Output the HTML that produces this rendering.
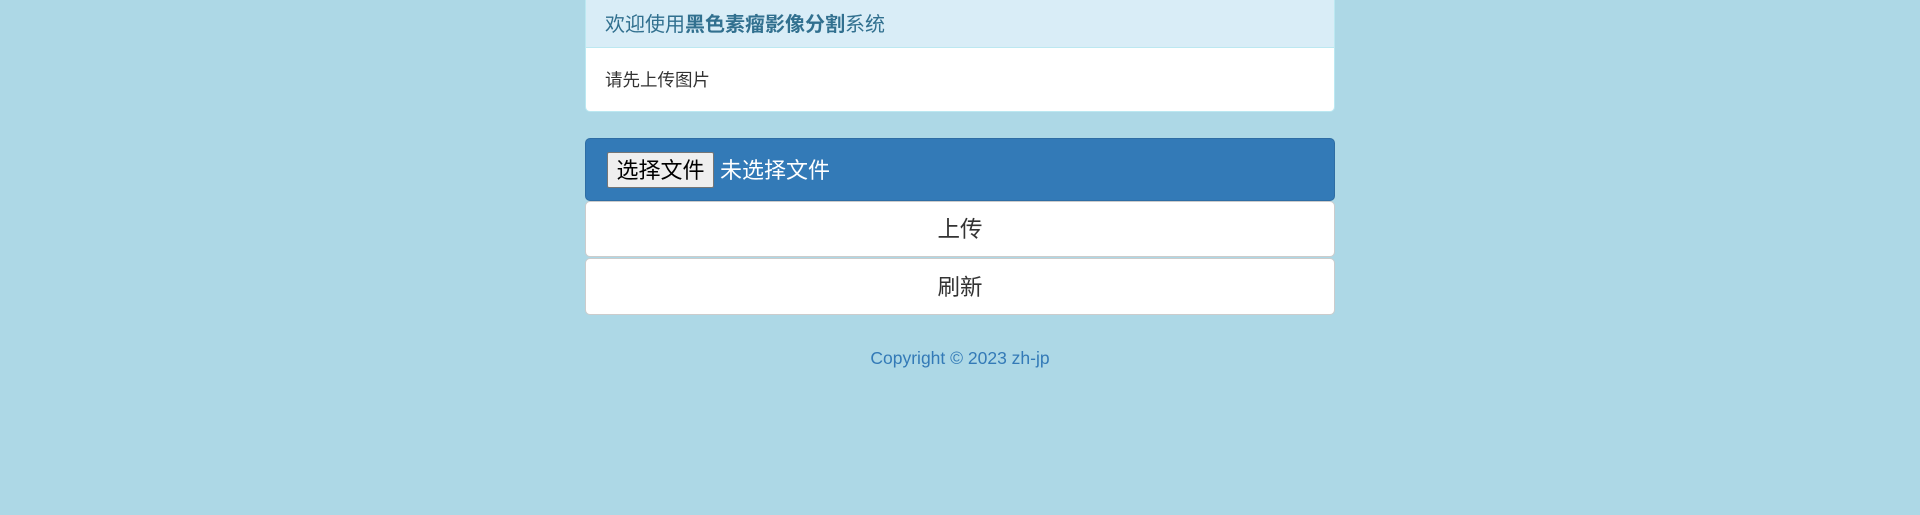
<!DOCTYPE html>
<html><head><meta charset="utf-8"><style>
body{margin:0;background:#add8e6;width:1920px;height:515px;overflow:hidden;font-family:"Liberation Sans","Noto Sans CJK SC",sans-serif;}
.panel{position:absolute;left:585px;top:0;width:748px;height:111px;border:1px solid #bce8f1;border-top:none;border-radius:0 0 5px 5px;background:#fff;overflow:hidden}
.ph{height:47px;background:#d9edf7;border-bottom:1px solid #bce8f1;color:#31708f;font-size:20px;line-height:51px;padding-left:19px}
.ph b{font-weight:bold}
.pb{font-size:17.5px;color:#333;padding-left:19px;line-height:64px}
.blue{position:absolute;left:585px;top:138px;width:748px;height:61px;background:#337ab7;border:1px solid #2e6da4;border-radius:5px}
.fbtn{position:absolute;left:21px;top:13px;width:107px;height:36px;background:#efefef;border:1px solid #767676;border-radius:2px;box-sizing:border-box;font-size:22px;line-height:36px;text-align:center;color:#000}
.ftxt{position:absolute;left:134px;top:14px;line-height:36px;font-size:22px;color:#fff}
.btn{position:absolute;left:585px;width:748px;background:#fff;border:1px solid #ccc;border-radius:5px;text-align:center;font-size:22.5px;color:#333}
.copy{position:absolute;left:0;width:1920px;top:348px;text-align:center;font-size:17.5px;color:#337ab7}
</style></head><body>
<div class="panel"><div class="ph">欢迎使用<b>黑色素瘤影像分割</b>系统</div><div class="pb">请先上传图片</div></div>
<div class="blue"><div class="fbtn">选择文件</div><div class="ftxt">未选择文件</div></div>
<div class="btn" style="top:201px;height:54px;line-height:56px">上传</div>
<div class="btn" style="top:258px;height:55px;line-height:57px">刷新</div>
<div class="copy">Copyright © 2023 zh-jp</div>
</body></html>
